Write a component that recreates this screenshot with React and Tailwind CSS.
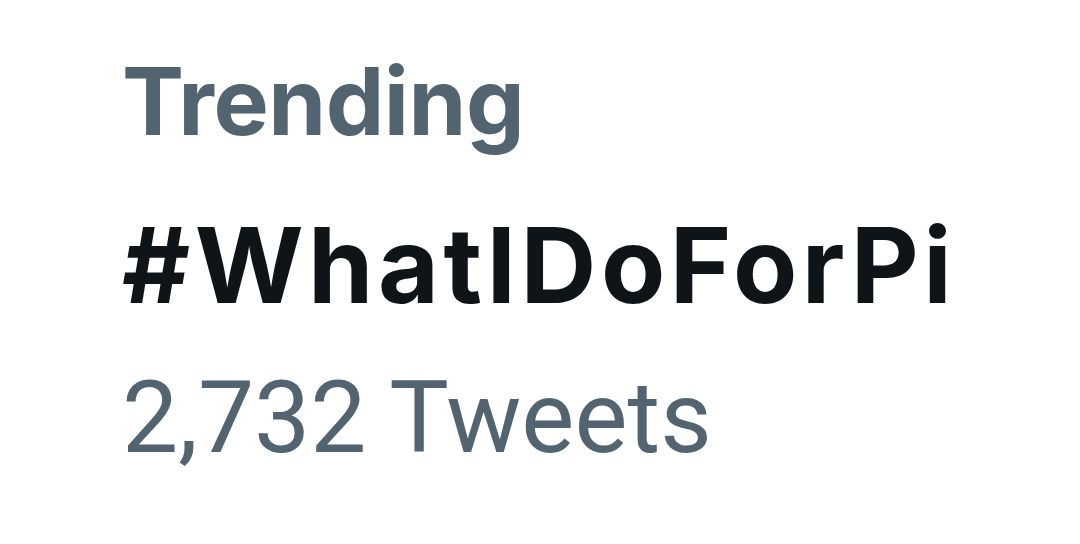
import React from 'react';

const App = () => {
  return (
    <div className="w-[1080px] h-[544px] bg-white overflow-hidden pl-[122px] pt-[36px]" style={{ fontFamily: 'Inter, "Noto Sans", sans-serif' }}>
      <div className="text-[93px] leading-[130px] font-bold text-[#536471] tracking-[-0.5px]">Trending</div>
      <div className="mt-[34px] text-[105px] leading-[130px] font-bold text-[#0f1419] tracking-[4.5px]">#WhatIDoForPi</div>
      <div className="mt-[13px] text-[100px] leading-[150px] text-[#536471] font-['Roboto',sans-serif]">2,732 Tweets</div>
    </div>
  );
};

export default App;
